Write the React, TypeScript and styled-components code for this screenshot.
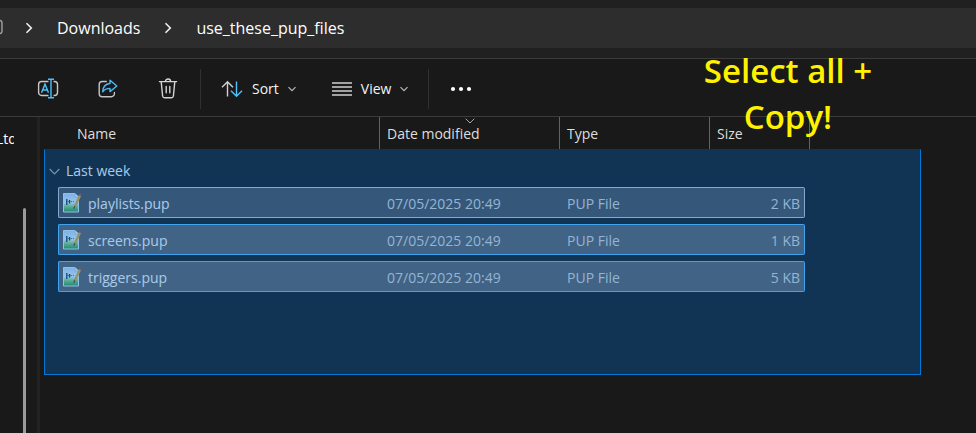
import React from "react";
import styled, { createGlobalStyle } from "styled-components";

const GlobalStyle = createGlobalStyle`
  * { box-sizing: border-box; }
  html, body, #root { height: 100%; }
  body {
    margin: 0;
    overflow: hidden;
    background: #191919;
    color: #f4f4f4;
    font: 14px/20px "Open Sans", "Noto Sans", sans-serif;
  }
  button { font: inherit; color: inherit; background: none; border: 0; padding: 0; }
`;

const Window = styled.div`
  position: relative;
  display: flex;
  flex-direction: column;
  height: 100%;
  min-height: 400px;
`;

const AddressArea = styled.header`
  padding: 8px 0 10px;
  background: #202020;
  border-bottom: 1px solid #3b3b3b;
`;

const Breadcrumbs = styled.nav`
  display: flex;
  align-items: center;
  height: 40px;
  background: #2d2d2d;
  font-size: 16px;
`;

const DeviceIcon = styled.svg`
  width: 3px;
  height: 18px;
  margin-right: 22px;
`;

const Crumb = styled.a`
  margin: 0 24px;
  color: #ffffff;
  text-decoration: none;
  white-space: nowrap;
`;

const Toolbar = styled.div`
  display: flex;
  align-items: center;
  gap: 20px;
  height: 58px;
  flex: none;
  padding: 2px 0 0 36px;
  background: #191919;
  border-bottom: 1px solid #3b3b3b;
`;

const ButtonGroup = styled.div`
  display: flex;
  gap: 36px;
`;

const IconButton = styled.button`
  display: grid;
  place-items: center;
  width: 24px;
  height: 40px;
`;

const MenuButton = styled.button`
  display: flex;
  align-items: center;
  height: 40px;
  gap: 9px;
`;

const Divider = styled.span`
  width: 1px;
  height: 40px;
  background: #303030;
`;

const Body = styled.div`
  display: flex;
  flex: 1;
  min-height: 0;
`;

const Sidebar = styled.aside`
  display: flex;
  justify-content: space-between;
  width: 40px;
  flex: none;
  border-right: 3px solid #222222;
`;

const TreeLabel = styled.div`
  width: 14px;
  padding-top: 12px;
  overflow: hidden;
  text-indent: -4px;
  white-space: nowrap;
  color: #ffffff;
`;

const ScrollThumb = styled.div`
  width: 3px;
  margin: 91px 11px 0 0;
  border-radius: 2px 2px 0 0;
  background: #9a9a9a;
`;

const FilePane = styled.main`
  position: relative;
  flex: 1;
  min-width: 0;
  padding-left: 4px;
  overflow: hidden;
`;

const FileTable = styled.table`
  width: 766px;
  table-layout: fixed;
  border-collapse: separate;
  border-spacing: 0;
`;

const Col = styled.col<{ $w: number }>`
  width: ${(p) => p.$w}px;
`;

const HeadCell = styled.th<{ $first?: boolean }>`
  position: relative;
  height: 32px;
  padding: 2px 0 0 ${(p) => (p.$first ? 33 : 7)}px;
  border-left: ${(p) => (p.$first ? "0" : "1px solid #636363")};
  font-weight: 400;
  text-align: left;
  color: #dedede;
`;

const HeadEnd = styled.td`
  border-right: 1px solid #636363;
`;

const SortMark = styled.svg`
  position: absolute;
  top: 1px;
  left: 50%;
  transform: translateX(-50%);
`;

const GroupCell = styled.th`
  height: 38px;
  padding: 6px 0 0 5px;
  font-weight: 400;
  text-align: left;
  color: #f0f0f0;
`;

const GroupButton = styled.button`
  display: flex;
  align-items: center;
  gap: 6px;
`;

const DataCell = styled.td`
  padding: 0 0 6px;
`;

const CellBox = styled.div<{ $focus?: boolean; $edge?: "start" | "end" }>`
  display: flex;
  align-items: center;
  justify-content: ${(p) => (p.$edge === "end" ? "flex-end" : "flex-start")};
  gap: 8px;
  height: 31px;
  margin-left: ${(p) => (p.$edge === "start" ? 14 : 0)}px;
  padding: 2px ${(p) => (p.$edge === "end" ? 4 : 0)}px 0 ${(p) => (p.$edge === "start" ? 4 : 8)}px;
  border: 0 solid ${(p) => (p.$focus ? "#c0c0c8" : "#5eb8f5")};
  border-width: 1px ${(p) => (p.$edge === "end" ? 1 : 0)}px 1px ${(p) => (p.$edge === "start" ? 1 : 0)}px;
  border-radius: ${(p) => (p.$edge === "start" ? "2px 0 0 2px" : p.$edge === "end" ? "0 2px 2px 0" : "0")};
  background: ${(p) => (p.$focus ? "#4d4d4f" : "#5e5d5f")};
  color: ${(p) => (p.$edge === "start" ? "#f0f0f0" : "#d2d2d2")};
  white-space: nowrap;
`;

const Marquee = styled.div`
  position: absolute;
  top: 32px;
  left: 4px;
  width: 877px;
  height: 226px;
  border: 1px solid #0078d7;
  border-top-color: transparent;
  background: rgba(0, 114, 222, 0.3);
  pointer-events: none;
`;

const Annotation = styled.p`
  position: absolute;
  top: 48px;
  left: 688px;
  width: 200px;
  margin: 0;
  text-align: center;
  font-size: 33px;
  line-height: 46px;
  font-weight: 600;
  color: #fff200;
  pointer-events: none;
`;

const CrumbArrow = () => (
  <svg width="8" height="12" viewBox="0 0 8 12" fill="none" stroke="#f0f0f0" strokeWidth="1.6">
    <path d="M1.5 1.2 6.3 6 1.5 10.8" />
  </svg>
);

const Chevron = ({ size = 8, color = "#b8b8b8" }: { size?: number; color?: string }) => (
  <svg width={size} height={size} viewBox="0 0 8 8" fill="none" stroke={color} strokeWidth={size > 8 ? 0.9 : 1.2}>
    <path d="M.5 2.2 4 5.7 7.5 2.2" />
  </svg>
);

const RenameIcon = () => (
  <svg width="22" height="22" viewBox="0 0 22 22" fill="none" strokeWidth="1.4">
    <path d="M11.5 3.5H4.6A3 3 0 0 0 1.6 6.5v8a3 3 0 0 0 3 3h6.9M16.5 3.5h1a3 3 0 0 1 3 3v8a3 3 0 0 1-3 3h-1" stroke="#c8c8c8" />
    <path d="M4.5 14.8 8 6.2l3.5 8.6M5.7 12h4.6M14 1.5v18M11 1.3h6M11 19.7h6" stroke="#4cc2ff" />
  </svg>
);

const ShareIcon = () => (
  <svg width="22" height="22" viewBox="0 0 22 22" fill="none" strokeWidth="1.4" strokeLinejoin="round">
    <path d="M9.3 3.5H5.2a3 3 0 0 0-3 3v9.2a3 3 0 0 0 3 3h9.2a3 3 0 0 0 3-3v-1.3" stroke="#c4c4c4" strokeLinecap="round" />
    <path d="M13 2.2 19.8 8 13 13.6v-3.2c-3.5 0-5.6 1-7.3 3.4.2-4.8 2.7-7.9 7.3-8.3z" stroke="#4cb8f5" />
  </svg>
);

const TrashIcon = () => (
  <svg width="22" height="22" viewBox="0 0 22 22" fill="none" stroke="#d4d4d4" strokeWidth="1.4" strokeLinecap="round">
    <path d="M2.4 3.6h17.2M8.4 3.6a2.6 2.6 0 0 1 5.2 0M4.2 3.6l1.4 14.4a2 2 0 0 0 2 1.8h6.8a2 2 0 0 0 2-1.8L17.8 3.6M9.2 8.5v6.3M12.8 8.5v6.3" />
  </svg>
);

const SortIcon = () => (
  <svg width="22" height="18" viewBox="0 0 22 18" fill="none" strokeWidth="1.4">
    <path d="M6.5 16.5V2M1 7.3 6.5 1.7 12 7.3" stroke="#d0d0d0" />
    <path d="M15.5 1.5V16M10 10.7l5.5 5.6 5.5-5.6" stroke="#4cc2ff" />
  </svg>
);

const ViewIcon = () => (
  <svg width="20" height="14" viewBox="0 0 20 14" stroke="#d0d0d0" strokeWidth="1.3">
    <path d="M0 1h20M0 5h20M0 9h20M0 13h20" />
  </svg>
);

const MoreIcon = () => (
  <svg width="22" height="6" viewBox="0 0 22 6" fill="#ffffff">
    <circle cx="3" cy="3" r="2.1" />
    <circle cx="11" cy="3" r="2.1" />
    <circle cx="19" cy="3" r="2.1" />
  </svg>
);

const PupIcon = () => (
  <svg width="17" height="24" viewBox="0 0 17 24" overflow="visible">
    <defs>
      <linearGradient id="page" x1="0" y1="0" x2="0" y2="1">
        <stop offset="0" stopColor="#b4cfee" />
        <stop offset="0.5" stopColor="#d8eaea" />
        <stop offset="0.68" stopColor="#8acb7c" />
        <stop offset="1" stopColor="#2f9440" />
      </linearGradient>
    </defs>
    <path d="M.5 1.5h11.5l3.5 3.5v15H.5z" fill="url(#page)" stroke="#cfe4ee" />
    <path d="M12 1.5v3.5h3.5" fill="#eef3fa" stroke="#a2b6cf" strokeWidth=".7" />
    <path d="M3.8 7v6M6.6 8v3.4" stroke="#18304c" strokeWidth="1.3" />
    <path d="M4.4 9.6h2M7.6 9.6h1.4M9.8 9.6h1.2" stroke="#4a6c8c" />
    <path d="M17 3.4 11.8 14.6" stroke="#d8a030" strokeWidth="2.4" />
    <path d="m17.7 1.8-.8 1.8" stroke="#a04860" strokeWidth="2.4" />
    <path d="m11.8 14.2-1 2.6" stroke="#46402e" strokeWidth="1.2" />
  </svg>
);

const files = [
  { name: "playlists.pup", size: "2 KB" },
  { name: "screens.pup", size: "1 KB" },
  { name: "triggers.pup", size: "5 KB" },
];

export default function App() {
  return (
    <>
      <GlobalStyle />
      <Window>
        <AddressArea>
          <Breadcrumbs aria-label="Path">
            <DeviceIcon viewBox="0 0 3 18" fill="none" stroke="#a0a0a0" strokeWidth="1.4">
              <path d="M-2 1.5h1.5a2.5 2.5 0 0 1 2.5 2.5v8a2.5 2.5 0 0 1-2.5 2.5H-2" />
            </DeviceIcon>
            <CrumbArrow />
            <Crumb href="#downloads">Downloads</Crumb>
            <CrumbArrow />
            <Crumb href="#files">use_these_pup_files</Crumb>
          </Breadcrumbs>
        </AddressArea>
        <Toolbar>
          <ButtonGroup>
            <IconButton aria-label="Rename"><RenameIcon /></IconButton>
            <IconButton aria-label="Share"><ShareIcon /></IconButton>
            <IconButton aria-label="Delete"><TrashIcon /></IconButton>
          </ButtonGroup>
          <Divider />
          <ButtonGroup>
            <MenuButton><SortIcon />Sort<Chevron /></MenuButton>
            <MenuButton><ViewIcon />View<Chevron /></MenuButton>
          </ButtonGroup>
          <Divider />
          <IconButton aria-label="More"><MoreIcon /></IconButton>
        </Toolbar>
        <Body>
          <Sidebar>
            <TreeLabel>Ltd</TreeLabel>
            <ScrollThumb />
          </Sidebar>
          <FilePane>
            <FileTable>
              <colgroup>
                <Col $w={335} /><Col $w={180} /><Col $w={150} /><Col $w={96} /><Col $w={5} />
              </colgroup>
              <thead>
                <tr>
                  <HeadCell scope="col" $first>Name</HeadCell>
                  <HeadCell scope="col">
                    Date modified
                    <SortMark width="10" height="6" viewBox="0 0 10 6" fill="none" stroke="#a8a8a8">
                      <path d="M.7.7 5 5 9.3.7" />
                    </SortMark>
                  </HeadCell>
                  <HeadCell scope="col">Type</HeadCell>
                  <HeadCell scope="col">Size</HeadCell>
                  <HeadEnd />
                </tr>
              </thead>
              <tbody>
                <tr>
                  <GroupCell colSpan={5} scope="rowgroup">
                    <GroupButton><Chevron size={11} color="#a0a0a0" />Last week</GroupButton>
                  </GroupCell>
                </tr>
                {files.map((file, i) => (
                  <tr key={file.name}>
                    <DataCell><CellBox $focus={i === 0} $edge="start"><PupIcon />{file.name}</CellBox></DataCell>
                    <DataCell><CellBox $focus={i === 0}>07/05/2025 20:49</CellBox></DataCell>
                    <DataCell><CellBox $focus={i === 0}>PUP File</CellBox></DataCell>
                    <DataCell><CellBox $focus={i === 0} $edge="end">{file.size}</CellBox></DataCell>
                    <td />
                  </tr>
                ))}
              </tbody>
            </FileTable>
            <Marquee />
          </FilePane>
        </Body>
        <Annotation>Select all +<br />Copy!</Annotation>
      </Window>
    </>
  );
}
